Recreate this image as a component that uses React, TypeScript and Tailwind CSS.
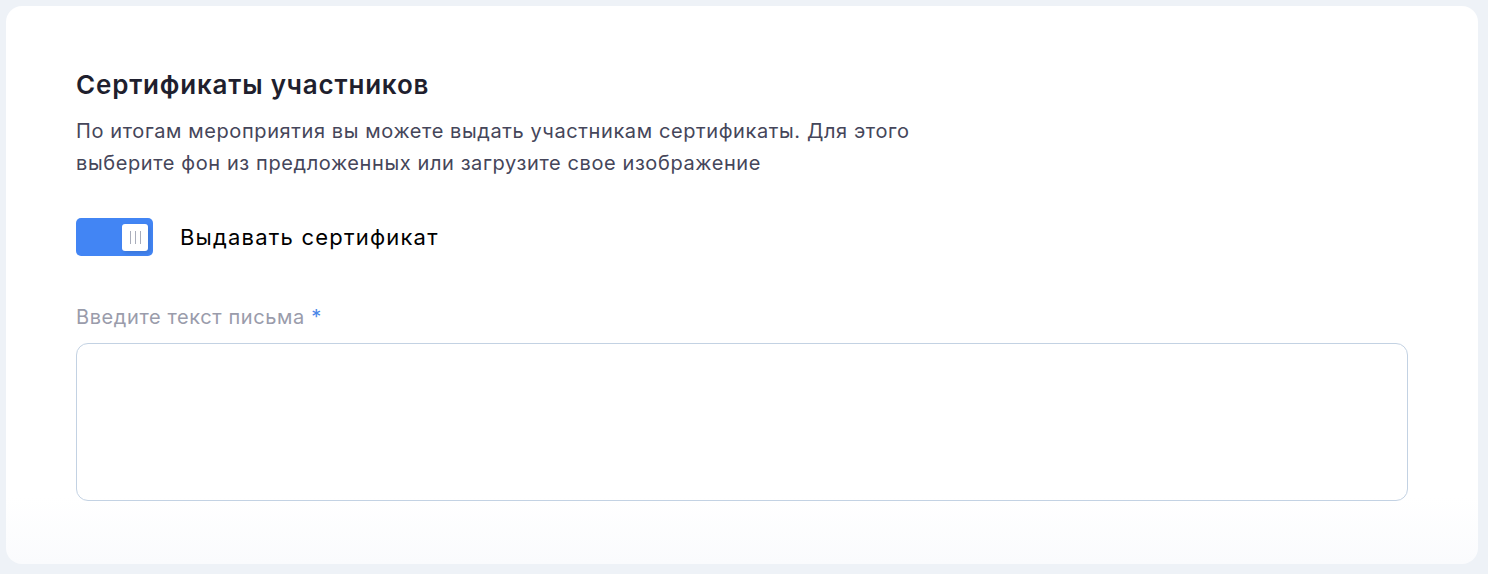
import { useState } from 'react';

export default function App() {
  const [enabled, setEnabled] = useState(true);

  return (
    <div className="w-full h-[574px] bg-[#eef2f7] p-[6px] pr-[10px] pb-[10px]" style={{ fontFamily: 'Inter, "Noto Sans", sans-serif' }}>
      <div className="h-full bg-gradient-to-b from-white from-[88%] to-[#fafbfd] rounded-[16px] pl-[70px] pr-[70px] pt-[62px]">
        <h2 className="text-[26px] leading-[34px] font-semibold text-[#1f1f2e] tracking-[0.8px]">Сертификаты участников</h2>
        <p className="mt-[13px] text-[20px] leading-[32px] text-[#45465a] tracking-[0.6px] max-w-[880px]">
          По итогам мероприятия вы можете выдать участникам сертификаты. Для этого выберите фон из предложенных или загрузите свое изображение
        </p>

        {/* Toggle */}
        <div className="mt-[39px] flex items-center gap-[27px]">
          <button
            onClick={() => setEnabled(v => !v)}
            className={`w-[77px] h-[38px] rounded-[5px] flex items-center pr-[5px] pl-[5px] ${enabled ? 'bg-[#4285f4] justify-end' : 'bg-[#d5dbe5] justify-start'}`}
          >
            <span className="w-[26px] h-[27px] rounded-[3px] bg-white shadow-[2px_2px_4px_rgba(0,0,0,0.12)] flex items-center justify-center gap-[4px]">
              <span className="w-px h-[13px] bg-[#a9adbb]" />
              <span className="w-px h-[13px] bg-[#a9adbb]" />
              <span className="w-px h-[13px] bg-[#a9adbb]" />
            </span>
          </button>
          <span className="text-[22px] tracking-[1.2px] text-black">Выдавать сертификат</span>
        </div>

        {/* Text field */}
        <label className="block mt-[48px] text-[20px] leading-[26px] tracking-[0.6px] text-[#9a9cab]">
          Введите текст письма <span className="text-[#4a86e8]">*</span>
        </label>
        <textarea className="mt-[13px] block w-full h-[158px] rounded-[12px] border border-[#c3d2e3] resize-none outline-none p-4 text-[16px]" />
      </div>
    </div>
  );
}
